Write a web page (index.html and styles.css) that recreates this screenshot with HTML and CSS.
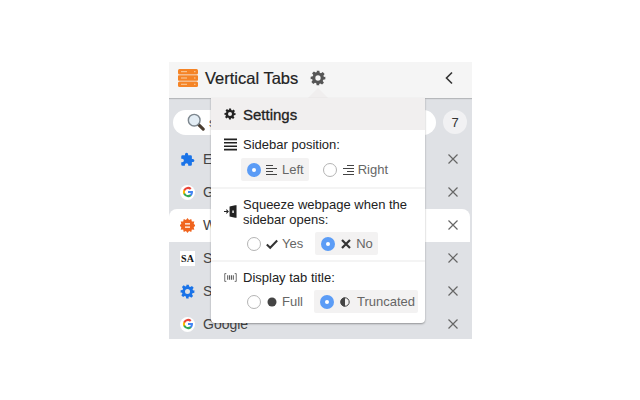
FILE: index.html
```html
<!DOCTYPE html>
<html lang="en">
<head>
<meta charset="utf-8">
<title>Vertical Tabs</title>
<link rel="stylesheet" href="styles.css">
</head>
<body>
<svg class="defs" width="0" height="0" aria-hidden="true">
  <defs>
    <symbol id="gear" viewBox="0 0 24 24"><path fill-rule="evenodd" d="M10 1h4l.6 3.1 1.900.8 2.600-1.800 2.800 2.800-1.800 2.600.8 1.900L23 10v4l-3.100.6-.8 1.900 1.800 2.600-2.800 2.800-2.600-1.800-1.900.8L14 23h-4l-.6-3.100-1.900-.8-2.600 1.800-2.800-2.800 1.800-2.600-.8-1.900L1 14v-4l3.100-.6.8-1.900-1.800-2.600 2.800-2.800 2.600 1.800 1.900-.8zM12 8a4 4 0 1 0 0 8 4 4 0 0 0 0-8z"/></symbol>
    <symbol id="google" viewBox="0 0 24 24">
      <path fill="#4285f4" d="M22 12.200c0-.7-.1-1.400-.2-2H12v3.900h5.600a4.800 4.800 0 0 1-2.100 3.100v2.600h3.300c2-1.800 3.200-4.500 3.200-7.600z"/>
      <path fill="#34a853" d="M12 22.300c2.800 0 5.100-.9 6.800-2.500l-3.300-2.600c-.9.600-2.100 1-3.500 1-2.700 0-5-1.800-5.800-4.300H2.800v2.700a10.300 10.300 0 0 0 9.200 5.700z"/>
      <path fill="#fbbc05" d="M6.200 13.900a6.200 6.200 0 0 1 0-3.900V7.300H2.800a10.300 10.300 0 0 0 0 9.300z"/>
      <path fill="#ea4335" d="M12 5.800c1.500 0 2.900.5 4 1.500l3-2.900A10.300 10.300 0 0 0 2.800 7.300L6.200 10C7 7.500 9.300 5.800 12 5.800z"/>
    </symbol>
    <symbol id="cross" viewBox="0 0 12 12"><path d="M1.500 1.500l9 9M10.500 1.500l-9 9" fill="none" stroke="currentColor" stroke-width="1.200"/></symbol>
  </defs>
</svg>
<main class="sidebar">
  <header class="topbar">
    <svg class="logo" viewBox="0 0 20 18" aria-hidden="true">
      <rect x="0" y="0" width="20" height="5.400" rx="1.500" fill="#f58426"/>
      <rect x="0" y="6.300" width="20" height="5.400" rx=".8" fill="#f58426"/>
      <rect x="0" y="12.600" width="20" height="5.400" rx="1.500" fill="#f58426"/>
      <path d="M3 2.700h6M3 9h6M3 15.300h6M16 2.700h1.500M16 9h1.500M16 15.300h1.500" stroke="#fbd6b0" stroke-width=".9"/>
    </svg>
    <h1 class="app-title">Vertical Tabs</h1>
    <svg class="top-gear" aria-hidden="true"><use href="#gear"/></svg>
    <svg class="collapse" viewBox="0 0 10 14" aria-hidden="true"><path d="M8 1.500L2.500 7 8 12.500" fill="none" stroke="#333" stroke-width="1.600"/></svg>
  </header>
  <section class="tools">
    <div class="search">
      <svg class="lens" viewBox="0 0 20 20" aria-hidden="true">
        <path d="M12 12l6 6" stroke="#4a3c30" stroke-width="3.400" stroke-linecap="round"/>
        <circle cx="8" cy="8" r="6.500" fill="#e3edf5" stroke="#7d878f" stroke-width="1.600"/>
      </svg>
      <span class="search-text">s</span>
    </div>
    <span class="count">7</span>
  </section>
  <ul class="tabs">
    <li class="tab">
      <svg class="fav" viewBox="0 0 24 24" aria-hidden="true"><path fill="#1a73e8" d="M20.500 11H19V7a2 2 0 0 0-2-2h-4V3.500a2.500 2.500 0 0 0-5 0V5H4a2 2 0 0 0-2 2v3.800h1.500a2.700 2.700 0 0 1 0 5.400H2V20a2 2 0 0 0 2 2h3.800v-1.500a2.700 2.700 0 0 1 5.400 0V22H17a2 2 0 0 0 2-2v-4h1.500a2.500 2.500 0 0 0 0-5z"/></svg>
      <span class="tab-name">E</span>
      <svg class="close" aria-hidden="true"><use href="#cross"/></svg>
    </li>
    <li class="tab">
      <span class="fav-disc"><svg class="fav-small" aria-hidden="true"><use href="#google"/></svg></span>
      <span class="tab-name">G</span>
      <svg class="close" aria-hidden="true"><use href="#cross"/></svg>
    </li>
    <li class="tab tab-active">
      <svg class="fav" viewBox="0 0 24 24" aria-hidden="true"><path fill="#f0641e" fill-rule="evenodd" d="M12 0l2.500 3.200L18 1.600l.9 3.900 4-.1-1 3.900L25 12l-3.100 2.700 1 3.900-4-.1-.9 3.900-3.500-1.600L12 24l-2.500-3.200L6 22.400l-.9-3.900-4 .1 1-3.900L-1 12l3.100-2.700-1-3.900 4 .1L6 1.600l3.500 1.600zM8 8.500v2h8v-2zM8 13.500v2h8v-2z"/></svg>
      <span class="tab-name">W</span>
      <svg class="close" aria-hidden="true"><use href="#cross"/></svg>
    </li>
    <li class="tab">
      <span class="fav-sa">SA</span>
      <span class="tab-name">S</span>
      <svg class="close" aria-hidden="true"><use href="#cross"/></svg>
    </li>
    <li class="tab">
      <svg class="fav fav-gear" aria-hidden="true"><use href="#gear"/></svg>
      <span class="tab-name">S</span>
      <svg class="close" aria-hidden="true"><use href="#cross"/></svg>
    </li>
    <li class="tab">
      <span class="fav-disc"><svg class="fav-small" aria-hidden="true"><use href="#google"/></svg></span>
      <span class="tab-name">Google</span>
      <svg class="close" aria-hidden="true"><use href="#cross"/></svg>
    </li>
  </ul>

  <span class="pointer"></span>
  <aside class="popover">
    <h2 class="pop-title"><svg class="pop-gear" aria-hidden="true"><use href="#gear"/></svg>Settings</h2>

    <section class="group group-position">
      <div class="label-row">
        <svg class="label-icon" viewBox="0 0 14 14" aria-hidden="true"><path d="M0 1.500h14M0 5.200h14M0 8.800h14M0 12.500h14" stroke="#222" stroke-width="1.700"/></svg>
        <span>Sidebar position:</span>
      </div>
      <div class="options opts-position">
        <label class="opt opt-on"><span class="radio radio-on"></span>
          <svg class="opt-icon" viewBox="0 0 12 12" aria-hidden="true"><path d="M0 1.500h7M0 4.500h11M0 7.500h7M0 10.500h11" stroke="#444" stroke-width="1.200"/></svg>Left</label>
        <label class="opt"><span class="radio"></span>
          <svg class="opt-icon" viewBox="0 0 12 12" aria-hidden="true"><path d="M5 1.500h7M1 4.500h11M5 7.500h7M1 10.500h11" stroke="#444" stroke-width="1.200"/></svg>Right</label>
      </div>
    </section>

    <section class="group group-squeeze">
      <div class="label-row label-top">
        <svg class="label-icon icon-squeeze" viewBox="0 0 14 14" aria-hidden="true"><path d="M6 1.500l6-1.200h1.500v13.400H12l-6-1.200z" fill="#222"/><path d="M9 6h1.500v2.500H9z" fill="#fff"/><path d="M0 7h4M2.500 5l2 2-2 2" fill="none" stroke="#222" stroke-width="1.100"/></svg>
        <span>Squeeze webpage when the sidebar opens:</span>
      </div>
      <div class="options opts-squeeze">
        <label class="opt"><span class="radio"></span>
          <svg class="opt-icon" viewBox="0 0 12 12" aria-hidden="true"><path d="M.8 6.500l3.400 3.300L11.200 2.500" fill="none" stroke="#333" stroke-width="2"/></svg>Yes</label>
        <label class="opt opt-on"><span class="radio radio-on"></span>
          <svg class="opt-icon" viewBox="0 0 12 12" aria-hidden="true"><path d="M2 2l8 8M10 2l-8 8" stroke="#333" stroke-width="2.200"/></svg>No</label>
      </div>
    </section>

    <section class="group group-title">
      <div class="label-row">
        <svg class="label-icon" viewBox="0 0 14 10" aria-hidden="true"><path d="M2.500 .8H.8v8.400h1.700M11.500 .8h1.700v8.400h-1.700" fill="none" stroke="#555" stroke-width=".9"/><path d="M4 2.500v5M6 2.500v5M8 2.500v5M10 2.500v5" stroke="#555" stroke-width="1.100"/></svg>
        <span>Display tab title:</span>
      </div>
      <div class="options opts-title">
        <label class="opt"><span class="radio"></span>
          <svg class="opt-icon" viewBox="0 0 12 12" aria-hidden="true"><circle cx="6" cy="6" r="4.500" fill="#444"/></svg>Full</label>
        <label class="opt opt-on opt-wide"><span class="radio radio-on"></span>
          <svg class="opt-icon" viewBox="0 0 12 12" aria-hidden="true"><circle cx="6" cy="6" r="4.200" fill="none" stroke="#444" stroke-width="1"/><path d="M6 1.500a4.500 4.500 0 0 0 0 9z" fill="#444"/></svg>Truncated</label>
      </div>
    </section>
  </aside>
</main>
</body>
</html>
```

FILE: styles.css
```css
* { box-sizing: border-box; }
html, body { margin: 0; padding: 0; background: #fff; }
body {
  padding: 62px 0 0 169px;
  height: 400px;
  overflow: hidden;
  font-family: "Liberation Sans", Arial, sans-serif;
  color: #333;
}
.defs { position: absolute; }
.sidebar {
  position: relative;
  width: 303px;
  height: 277px;
  background: #dfe1e5;
  overflow: hidden;
}
.topbar {
  display: flex;
  align-items: center;
  height: 36px;
  padding: 0 18px 4px 9px;
  background: #f5f5f5;
  box-shadow: 0 1px 1px rgba(0,0,0,.18);
}
.logo { width: 20px; height: 18px; flex: none; }
.app-title {
  margin: 0 0 0 7px;
  font-size: 16.500px;
  font-weight: 400;
  color: #222;
  -webkit-text-stroke: .2px #222;
}
.top-gear { width: 16px; height: 16px; margin-left: 12px; fill: #555; flex: none; }
.collapse { width: 10px; height: 14px; margin-left: auto; }
.tools {
  display: flex;
  align-items: center;
  gap: 7px;
  height: 45px;
  padding: 3px 5px 0 4px;
}
.search {
  display: flex;
  align-items: center;
  flex: 1;
  height: 25px;
  padding-left: 14px;
  background: #fff;
  border-radius: 13px;
}
.lens { width: 18px; height: 18px; flex: none; }
.search-text { margin-left: 4px; font-size: 13px; color: #555; }
.count {
  display: flex;
  align-items: center;
  justify-content: center;
  width: 24px;
  height: 24px;
  border-radius: 50%;
  background: #f1f1f3;
  font-size: 13px;
  color: #333;
}
.tabs { list-style: none; margin: 0; padding: 0; }
.tab {
  display: flex;
  align-items: center;
  height: 33px;
  padding: 0 13px 1px 11px;
  font-size: 14px;
  color: #444;
}
.tab-active { background: #fff; border-radius: 8px 8px 0 0; margin-right: 2px; padding-right: 11px; }
.fav, .fav-disc, .fav-sa { width: 15px; height: 15px; flex: none; }
.fav-gear { fill: #1a73e8; }
.fav-disc {
  display: flex;
  align-items: center;
  justify-content: center;
  border-radius: 50%;
  background: #fff;
}
.fav-small { width: 12px; height: 12px; }
.fav-sa {
  display: block;
  background: #fff;
  font-family: "Liberation Serif", serif;
  font-weight: 700;
  font-size: 10px;
  line-height: 15px;
  text-align: center;
  color: #111;
}
.tab-name { margin-left: 8px; flex: 1; }
.close { width: 12px; height: 12px; color: #666; flex: none; }
.pointer {
  position: absolute;
  left: 139px;
  top: 26px;
  border: 10px solid transparent;
  border-top: 0;
  border-bottom-color: #f0eeee;
}
.popover {
  position: absolute;
  left: 42px;
  top: 36px;
  width: 214px;
  height: 225px;
  background: #fff;
  border-radius: 0 0 4px 4px;
  box-shadow: 0 1px 2px rgba(0,0,0,.35);
}
.pop-title {
  display: flex;
  align-items: center;
  height: 32px;
  margin: 0;
  padding-left: 13px;
  gap: 7px;
  background: #f1efef;
  font-size: 15px;
  font-weight: 400;
  color: #222;
  -webkit-text-stroke: .3px #222;
}
.pop-gear { width: 12px; height: 12px; fill: #222; }
.group { border-bottom: 2px solid #f4f4f4; font-size: 13px; color: #222; }
.group-position { height: 59px; padding-top: 7px; }
.group-squeeze { height: 73px; padding-top: 8px; }
.group-title { height: 61px; padding-top: 8px; border-bottom: 0; }
.label-row {
  display: flex;
  align-items: center;
  gap: 6px;
  padding-left: 13px;
  min-height: 15px;
}
.label-top { align-items: flex-start; line-height: 15px; padding-right: 8px; }
.label-icon { width: 13px; height: 13px; flex: none; }
.icon-squeeze { margin-top: 8px; }
.options { display: flex; margin-top: 6px; padding-left: 30px; }
.opts-position { gap: 8px; }
.opts-squeeze { gap: 7px; margin-top: 5px; }
.opts-title { gap: 6px; margin-top: 5px; }
.opt {
  display: flex;
  align-items: center;
  height: 23px;
  padding: 0 5px 0 6px;
  color: #666;
  font-size: 13px;
  border-radius: 2px;
}
.opt-on { background: #f3f2f2; }
.opt-wide { padding-right: 3px; }
.radio {
  width: 14px;
  height: 14px;
  border-radius: 50%;
  border: 1px solid #b4b4b4;
  background: #fff;
  flex: none;
}
.radio-on { background: #5b9cf6; border: 0; position: relative; }
.radio-on::after {
  content: "";
  position: absolute;
  left: 5px;
  top: 5px;
  width: 4px;
  height: 4px;
  border-radius: 50%;
  background: #fff;
}
.opt-icon { width: 12px; height: 12px; margin: 0 4px 0 5px; flex: none; }
.opt-wide .opt-icon { margin-right: 6px; }
```
